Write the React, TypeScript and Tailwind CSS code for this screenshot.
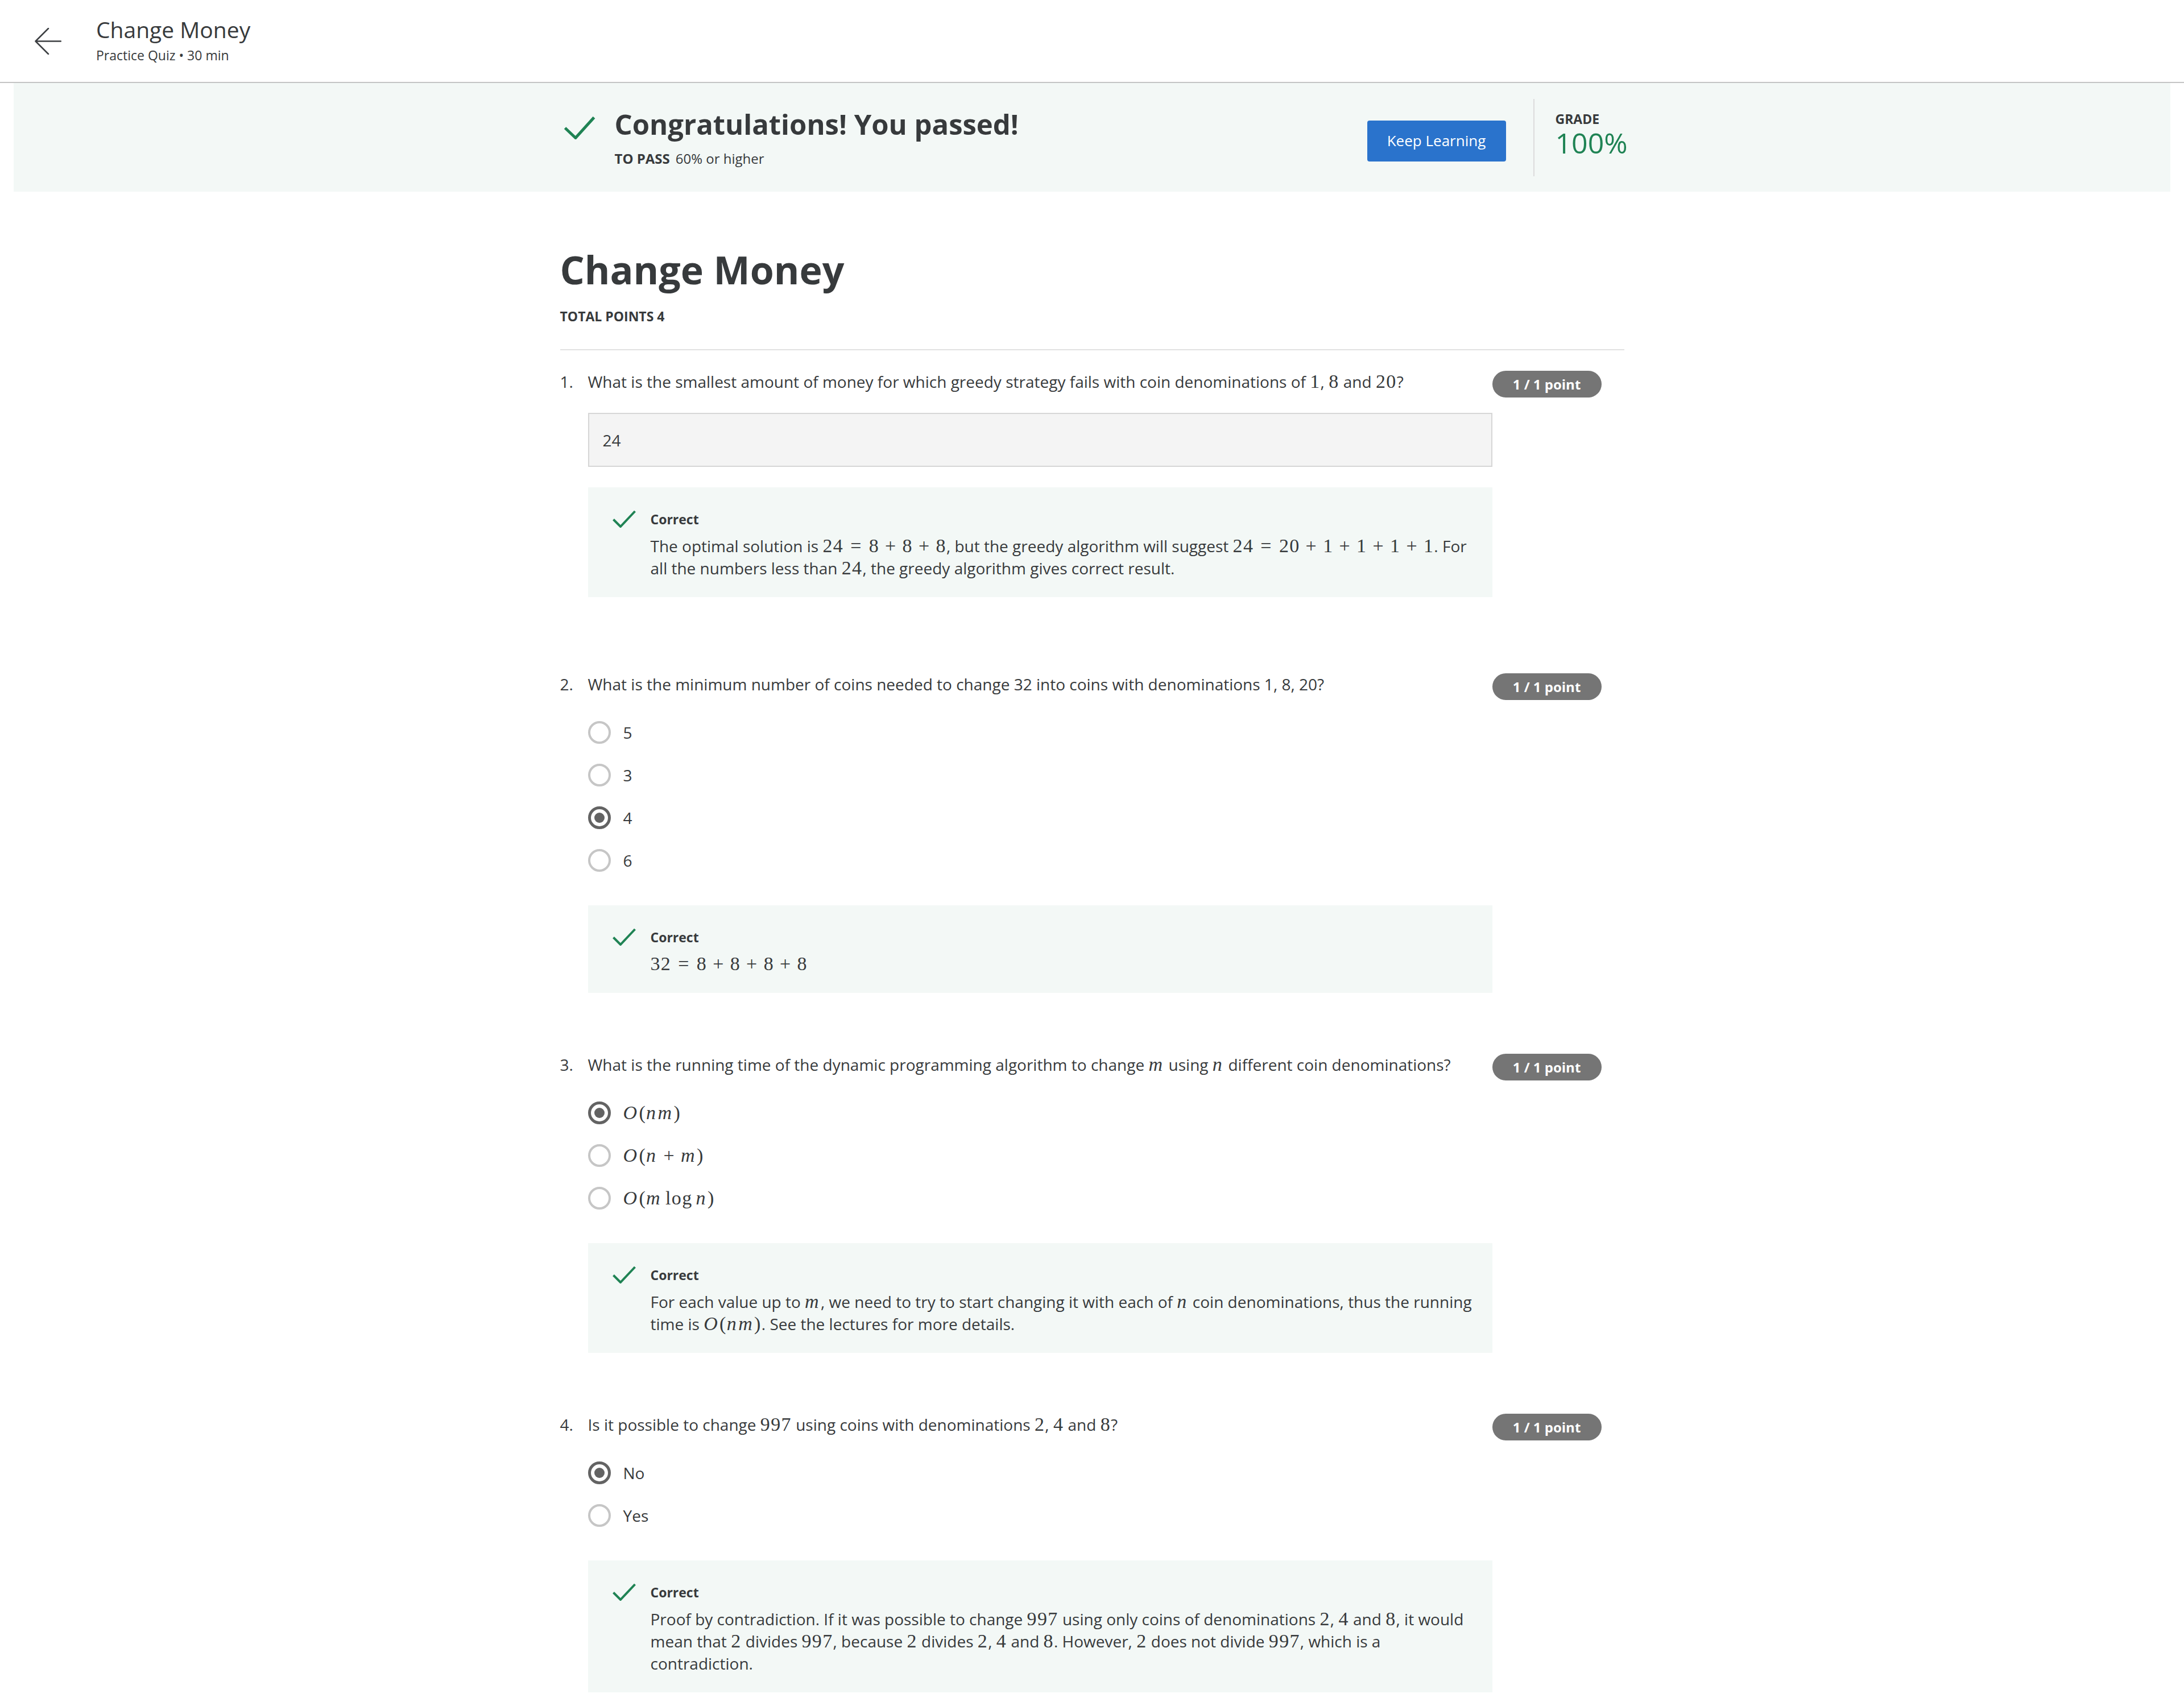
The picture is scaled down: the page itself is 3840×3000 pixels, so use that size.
import React from 'react';

type Choice = { label: React.ReactNode; selected?: boolean };

interface QuizQuestion {
  n: number;
  text: React.ReactNode;
  answer?: string;
  choices?: Choice[];
  feedback: React.ReactNode;
}

// tiny stand-in for the KaTeX output: digits upright, letters italic, spaced operators
function M({ tex }: { tex: string }) {
  const tokens = tex.match(/log|\d+|[a-zA-Z]|\S/g) ?? [];
  return (
    <span className="inline-block whitespace-nowrap font-['Liberation_Serif',serif] text-[34px] leading-[30px] tracking-[0.04em]">
      {tokens.map((t, i) => {
        if (t === '+') return <span key={i} className="mx-[10px]">+</span>;
        if (t === '=') return <span key={i} className="mx-[12px]">=</span>;
        if (t === 'log') return <span key={i} className="mx-[6px]">log</span>;
        if (/^[a-zA-Z]$/.test(t)) return <i key={i} className="mr-[2px]">{t}</i>;
        return <span key={i}>{t}</span>;
      })}
    </span>
  );
}

function Check({ className }: { className?: string }) {
  return (
    <svg className={className} width="41" height="31" viewBox="0 0 41 31" fill="none">
      <polyline points="1.5,16.5 14,29 39.5,2" stroke="#1f8354" strokeWidth="4" />
    </svg>
  );
}

function Radio({ selected }: { selected?: boolean }) {
  if (selected) {
    return (
      <span className="flex h-[40px] w-[40px] shrink-0 items-center justify-center rounded-full border-[5px] border-[#636363] bg-white">
        <span className="h-[18px] w-[18px] rounded-full bg-[#636363]" />
      </span>
    );
  }
  return <span className="h-[40px] w-[40px] shrink-0 rounded-full border-4 border-[#c6c6c6] bg-white" />;
}

function Feedback({ children, className }: { children: React.ReactNode; className: string }) {
  return (
    <div className={`flex items-start bg-[#f3f8f6] pb-[31px] pl-[43px] pr-[30px] pt-[40px] ${className}`}>
      <Check className="shrink-0" />
      <div className="ml-[26px] min-w-0">
        <div className="text-[23px] font-bold leading-[32px]">Correct</div>
        <div className="mt-[12px] text-[28px] leading-[39px]">{children}</div>
      </div>
    </div>
  );
}

const questions: QuizQuestion[] = [
  {
    n: 1,
    text: (
      <>
        What is the smallest amount of money for which greedy strategy fails with coin denominations of <M tex="1" />,{' '}
        <M tex="8" /> and <M tex="20" />?
      </>
    ),
    answer: '24',
    feedback: (
      <>
        The optimal solution is <M tex="24=8+8+8" />, but the greedy algorithm will suggest <M tex="24=20+1+1+1+1" />. For
        all the numbers less than <M tex="24" />, the greedy algorithm gives correct result.
      </>
    ),
  },
  {
    n: 2,
    text: 'What is the minimum number of coins needed to change 32 into coins with denominations 1, 8, 20?',
    choices: [{ label: '5' }, { label: '3' }, { label: '4', selected: true }, { label: '6' }],
    feedback: <M tex="32=8+8+8+8" />,
  },
  {
    n: 3,
    text: (
      <>
        What is the running time of the dynamic programming algorithm to change <M tex="m" /> using <M tex="n" /> different
        coin denominations?
      </>
    ),
    choices: [
      { label: <M tex="O(nm)" />, selected: true },
      { label: <M tex="O(n+m)" /> },
      { label: <M tex="O(mlogn)" /> },
    ],
    feedback: (
      <>
        For each value up to <M tex="m" />, we need to try to start changing it with each of <M tex="n" /> coin
        denominations, thus the running time is <M tex="O(nm)" />. See the lectures for more details.
      </>
    ),
  },
  {
    n: 4,
    text: (
      <>
        Is it possible to change <M tex="997" /> using coins with denominations <M tex="2" />, <M tex="4" /> and <M tex="8" />?
      </>
    ),
    choices: [{ label: 'No', selected: true }, { label: 'Yes' }],
    feedback: (
      <>
        Proof by contradiction. If it was possible to change <M tex="997" /> using only coins of denominations <M tex="2" />,{' '}
        <M tex="4" /> and <M tex="8" />, it would mean that <M tex="2" /> divides <M tex="997" />, because <M tex="2" /> divides{' '}
        <M tex="2" />, <M tex="4" /> and <M tex="8" />. However, <M tex="2" /> does not divide <M tex="997" />, which is a
        contradiction.
      </>
    ),
  },
];

function QuestionRow({ q }: { q: QuizQuestion }) {
  return (
    <div className={`flex items-start ${q.answer ? 'pb-[134px]' : 'pb-[107px]'}`}>
      <div className="w-[49px] shrink-0 text-[28px] leading-[39px]">{q.n}.</div>

      <div className="min-w-0 flex-1">
        <div className="text-[28px] leading-[39px]">{q.text}</div>

        {q.answer && (
          <>
            <div className="mt-[35px] flex h-[95px] items-center border-2 border-[#d6d6d6] bg-[#f4f4f4] pl-[24px] text-[28px]">
              {q.answer}
            </div>
            <Feedback className="mt-[36px]">{q.feedback}</Feedback>
          </>
        )}

        {q.choices && (
          <>
            <div className="mt-[27px]">
              {q.choices.map((c, i) => (
                <div key={i} className="flex h-[75px] items-center">
                  <Radio selected={c.selected} />
                  <span className="ml-[22px] text-[28px]">{c.label}</span>
                </div>
              ))}
            </div>
            <Feedback className="mt-[42px]">{q.feedback}</Feedback>
          </>
        )}
      </div>

      <div className="mr-[40px] h-[47px] w-[192px] shrink-0 rounded-full bg-[#757575] text-center text-[24px] font-bold leading-[47px] text-white">
        1 / 1 point
      </div>
    </div>
  );
}

export default function App() {
  return (
    <div className="min-h-[3000px] bg-white font-['Open_Sans',sans-serif] text-[#373a3c]">
      {/* Top bar */}
      <header className="flex h-[146px] items-center border-b-2 border-[#c4c4c4] pb-[4px] pl-[61px]">
        <svg className="mt-[4px]" width="47" height="47" viewBox="0 0 47 47" fill="none" stroke="#3c3f42" strokeWidth="2.5" strokeLinecap="round" strokeLinejoin="round">
          <path d="M46 23.5H1.5M24 1L1.5 23.5L24 46" />
        </svg>
        <div className="ml-[61px]">
          <div className="text-[39px] leading-[48px]">Change Money</div>
          <div className="mt-[6px] text-[23px] leading-[30px]">Practice Quiz • 30 min</div>
        </div>
      </header>

      {/* Result banner */}
      <section className="mx-[24px] h-[191px] bg-[#f3f8f6]">
        <div className="mx-auto flex h-full w-[1871px] items-center justify-between">
          <div className="flex items-start pl-[6px]">
            <svg className="mt-[16px] shrink-0" width="56" height="41" viewBox="0 0 56 41" fill="none">
              <polyline points="2.5,21 21,38.5 53.5,2.5" stroke="#1f8354" strokeWidth="5" />
            </svg>
            <div className="ml-[34px]">
              <div className="text-[49px] font-bold leading-[60px]">Congratulations! You passed!</div>
              <div className="mt-[15px] text-[24px] leading-[32px]">
                <span className="font-bold">TO PASS</span>
                <span className="ml-[10px]">60% or higher</span>
              </div>
            </div>
          </div>

          <div className="flex items-center">
            <button className="mt-[12px] h-[72px] w-[244px] rounded-[4px] bg-[#2a73cc] text-[26px] text-white">Keep Learning</button>
            <div className="ml-[48px] h-[136px] w-[2px] bg-[#dcdcdc]" />
            <div className="mb-[10px] ml-[37px] w-[121px]">
              <div className="text-[23px] font-bold leading-[28px]">GRADE</div>
              <div className="text-[50px] leading-[56px] text-[#1f8354]">100%</div>
            </div>
          </div>
        </div>
      </section>

      {/* Quiz body */}
      <main className="mx-auto w-[1871px] pt-[89px]">
        <h1 className="text-[68px] font-bold leading-[96px]">Change Money</h1>
        <div className="mt-[18px] text-[23px] font-bold leading-[32px]">TOTAL POINTS 4</div>
        <div className="mt-[42px] h-[2px] bg-[#e1e1e1]" />

        <div className="mt-[36px]">
          {questions.map(q => (
            <QuestionRow key={q.n} q={q} />
          ))}
        </div>
      </main>
    </div>
  );
}
